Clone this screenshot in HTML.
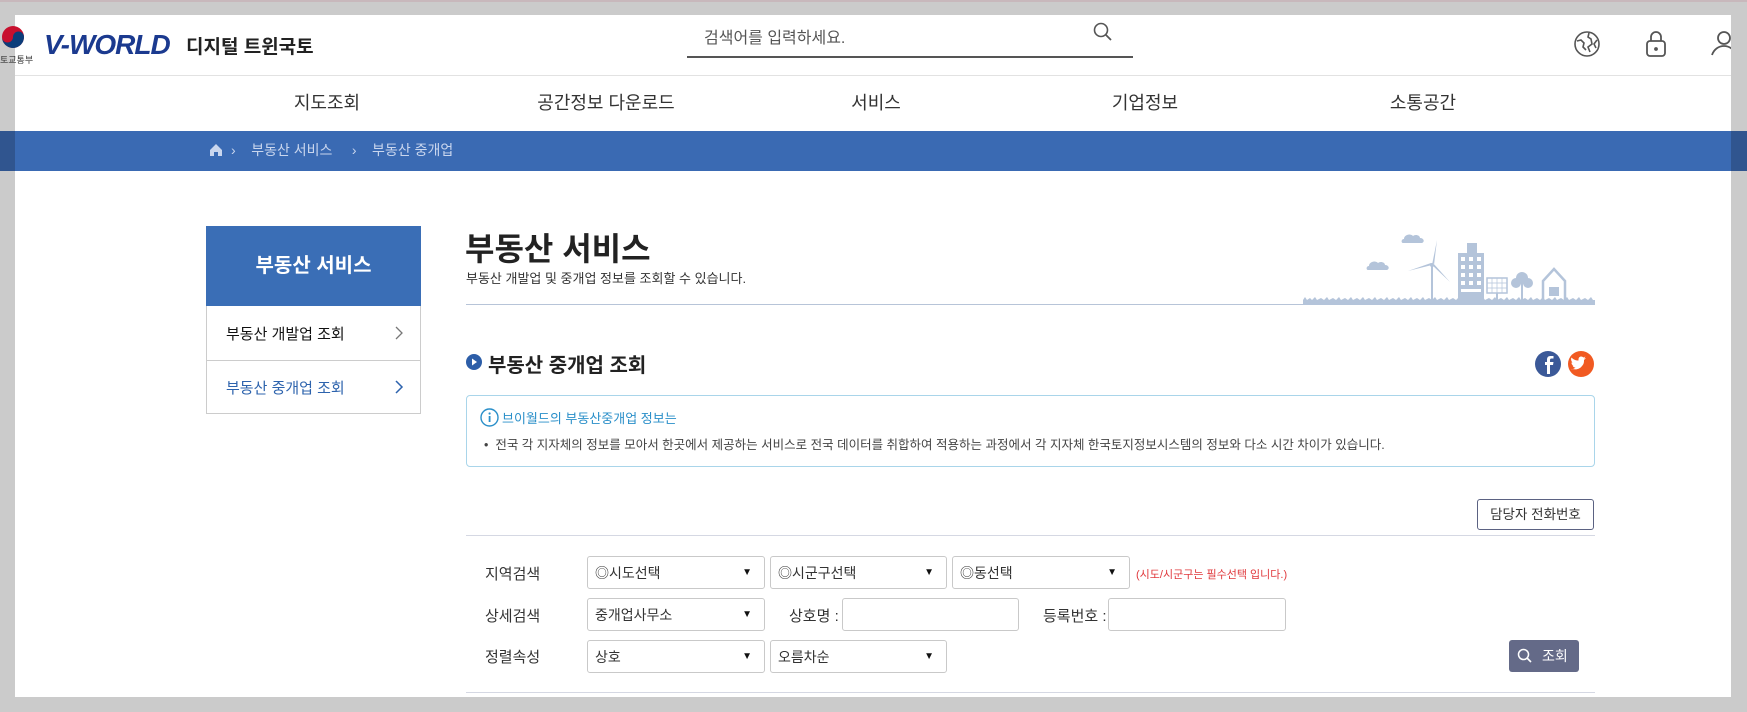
<!DOCTYPE html>
<html><head><meta charset="utf-8">
<style>
*{margin:0;padding:0;box-sizing:border-box}
body{width:1747px;height:712px;background:#cbcbcb;position:relative;overflow:hidden;font-family:"Liberation Sans","Noto Sans CJK KR",sans-serif;color:#222}
.a{position:absolute;white-space:nowrap}
.page{position:absolute;left:15px;top:15px;width:1716px;height:682px;background:#fff}
.sel{position:absolute;height:33px;border:1px solid #c9c9c9;border-radius:3px;background:#fff;font-size:14px;color:#333;padding:6px 0 0 7px}
.sel:after{content:"▼";position:absolute;right:12px;top:10px;font-size:10px;color:#111}
.inp{position:absolute;height:33px;border:1px solid #c9c9c9;border-radius:3px;background:#fff}
.lbl{font-size:15px;color:#333}
.nav{font-size:18px;color:#333;transform:translateX(-50%)}
</style></head><body>
<div class="a" style="left:0;top:0;width:1747px;height:2px;background:#c8b8bc"></div>
<div class="page"></div>
<!-- logo -->
<svg class="a" style="left:0;top:24px" width="28" height="26" viewBox="0 0 28 26"><circle cx="13" cy="13" r="11" fill="#c8102e"/><path d="M2 13a11 11 0 0 0 22 0a5.5 5.5 0 0 0-11 0a5.5 5.5 0 0 1-11 0z" fill="#0b3d7a"/></svg>
<div class="a" style="left:0;top:53px;font-size:9px;color:#333">토교통부</div>
<div class="a" style="left:44px;top:29px;font-size:28px;font-weight:bold;font-style:italic;color:#1b3a8f;letter-spacing:-1px">V-WORLD</div>
<div class="a" style="left:186px;top:32px;font-size:19px;font-weight:bold;color:#222">디지털 트윈국토</div>
<!-- search -->
<div class="a" style="left:704px;top:24px;font-size:16px;color:#555">검색어를 입력하세요.</div>
<div class="a" style="left:687px;top:56px;width:446px;height:2px;background:#555"></div>
<svg class="a" style="left:1093px;top:22px" width="20" height="20" viewBox="0 0 20 20"><circle cx="8" cy="8" r="6.5" fill="none" stroke="#555" stroke-width="1.6"/><path d="M13 13l5 5" stroke="#555" stroke-width="1.8"/></svg>
<!-- icons -->
<svg class="a" style="left:1573px;top:30px" width="28" height="28" viewBox="0 0 28 28" fill="none" stroke="#555" stroke-width="1.6"><circle cx="14" cy="14" r="12"/><path d="M4 11l4-1 3 3-1 4 3 3M16 3l-1 4 3 2 1 5-4 3 2 5M24 10l-3 4 2 4"/></svg>
<svg class="a" style="left:1644px;top:29px" width="24" height="30" viewBox="0 0 24 30" fill="none" stroke="#555" stroke-width="1.8"><rect x="3" y="12" width="18" height="15" rx="3"/><path d="M7 12V8a5 5 0 0 1 10 0v4"/><circle cx="12" cy="20" r="1" fill="#555"/></svg>
<svg class="a" style="left:1710px;top:29px" width="28" height="28" viewBox="0 0 28 28" fill="none" stroke="#555" stroke-width="1.8"><circle cx="14" cy="9" r="6"/><path d="M2 26c2-6 7-9 12-9s10 3 12 9"/></svg>
<div class="a" style="left:1731px;top:15px;width:16px;height:682px;background:#cbcbcb"></div>
<div class="a" style="left:15px;top:75px;width:1716px;height:1px;background:#e2e2e2"></div>
<div class="a nav" style="left:327px;top:89px">지도조회</div>
<div class="a nav" style="left:606px;top:89px">공간정보 다운로드</div>
<div class="a nav" style="left:876px;top:89px">서비스</div>
<div class="a nav" style="left:1145px;top:89px">기업정보</div>
<div class="a nav" style="left:1423px;top:89px">소통공간</div>
<!-- blue bar -->
<div class="a" style="left:0;top:131px;width:1747px;height:40px;background:#3a6ab3"></div>
<div class="a" style="left:0;top:131px;width:15px;height:40px;background:#30558f"></div>
<div class="a" style="left:1731px;top:131px;width:16px;height:40px;background:#30558f"></div>
<svg class="a" style="left:209px;top:143px" width="14" height="14" viewBox="0 0 14 14"><path d="M7 1L1 7v6h4V9h4v4h4V7z" fill="#c9d6ee"/></svg>
<div class="a" style="left:231px;top:140px;font-size:14px;color:#c9d6ee">›&nbsp;&nbsp;&nbsp; 부동산 서비스 &nbsp;&nbsp;&nbsp;&nbsp;›&nbsp;&nbsp;&nbsp; 부동산 중개업</div>
<!-- sidebar -->
<div class="a" style="left:206px;top:226px;width:215px;height:80px;background:#3a6eb6;color:#fff;font-size:20px;font-weight:bold;text-align:center;line-height:80px">부동산 서비스</div>
<div class="a" style="left:206px;top:306px;width:215px;height:108px;border:1px solid #ccc;border-top:none"></div>
<div class="a" style="left:206px;top:360px;width:215px;height:1px;background:#ccc"></div>
<div class="a" style="left:226px;top:323px;font-size:15px;color:#111">부동산 개발업 조회</div>
<svg class="a" style="left:394px;top:326px" width="10" height="14" viewBox="0 0 10 14"><path d="M2 1l6 6-6 6" fill="none" stroke="#777" stroke-width="1.3"/></svg>
<div class="a" style="left:226px;top:377px;font-size:15px;color:#2d63ad">부동산 중개업 조회</div>
<svg class="a" style="left:394px;top:380px" width="10" height="14" viewBox="0 0 10 14"><path d="M2 1l6 6-6 6" fill="none" stroke="#2d63ad" stroke-width="1.5"/></svg>
<!-- title -->
<div class="a" style="left:465px;top:224px;font-size:32px;font-weight:bold;color:#222">부동산 서비스</div>
<div class="a" style="left:466px;top:268px;font-size:13px;color:#333">부동산 개발업 및 중개업 정보를 조회할 수 있습니다.</div>
<div class="a" style="left:466px;top:304px;width:1129px;height:1px;background:#b7c4d8"></div>
<svg class="a" style="left:1302px;top:228px" width="294" height="80" viewBox="0 0 294 80" fill="#b4c4da">
<rect x="1" y="72" width="292" height="5"/>
<path d="M1 72l2-3 2 3 3-2 2 2 3-3 2 3 4-2 3 2 3-3 2 3 4-2 3 2 3-3 2 3 4-2 3 2 3-3 2 3 4-2 3 2 3-3 2 3 4-2 3 2 3-3 2 3 4-2 3 2 3-3 2 3 4-2 3 2 3-3 2 3 4-2 3 2 3-3 2 3 4-2 3 2 3-3 2 3 4-2 3 2 3-3 2 3 4-2 3 2 3-3 2 3 4-2 3 2 3-3 2 3 4-2 3 2 3-3 2 3 4-2 3 2 3-3 2 3 4-2 3 2 3-3 2 3 4-2 3 2 3-3 2 3 4-2 3 2 3-3 2 3 4-2 3 2 3-3 2 3 4-2 3 2 3-3 2 3 4-2 3 2 3-3 2 3 4-2 3 2 3-3 2 3 4-2 3 2 3-3 2 3 4-2 3 2 3-3 2 3 V74H1z"/>
<path d="M101 15c-2 0-2-4 1-4c0-4 6-6 9-3c2-2 7-1 7 2c4 0 5 4 2 5z"/>
<path d="M66 42c-2 0-2-4 1-4c0-4 6-6 9-3c2-2 7-1 7 2c4 0 5 4 2 5z"/>
<path d="M129 38h2v34h-2z"/><path d="M130 37l5-25-3 25zM130 37l-24 6 23-8zM130 37l18 17-17-19z"/><circle cx="130" cy="37" r="2"/>
<path d="M156 72V25h9V15h10v10h7v47z"/>
<g fill="#fff"><rect x="159" y="29" width="4" height="4"/><rect x="167" y="29" width="4" height="4"/><rect x="175" y="29" width="4" height="4"/><rect x="159" y="37" width="4" height="4"/><rect x="167" y="37" width="4" height="4"/><rect x="175" y="37" width="4" height="4"/><rect x="159" y="45" width="4" height="4"/><rect x="167" y="45" width="4" height="4"/><rect x="175" y="45" width="4" height="4"/><rect x="159" y="53" width="4" height="4"/><rect x="167" y="53" width="4" height="4"/><rect x="175" y="53" width="4" height="4"/><rect x="159" y="61" width="20" height="3"/></g>
<rect x="185" y="50" width="20" height="15" fill="none" stroke="#b4c4da" stroke-width="1.5"/><path d="M190 50v15M195 50v15M200 50v15M185 55h20M185 60h20" stroke="#b4c4da" stroke-width="0.7"/><rect x="194" y="65" width="2" height="8"/>
<circle cx="220" cy="50" r="6"/><circle cx="214" cy="55" r="5"/><circle cx="226" cy="55" r="5"/><rect x="219" y="55" width="2" height="18"/>
<path d="M241 72V53l11-12 11 12v19" fill="none" stroke="#b4c4da" stroke-width="2.5"/><rect x="247" y="59" width="10" height="9"/>
</svg>
<!-- section -->
<svg class="a" style="left:466px;top:354px" width="16" height="16" viewBox="0 0 16 16"><circle cx="8" cy="8" r="8" fill="#2d5ea8"/><path d="M6 4.5l5 3.5-5 3.5z" fill="#fff"/></svg>
<div class="a" style="left:488px;top:349px;font-size:20px;font-weight:bold;color:#222">부동산 중개업 조회</div>
<svg class="a" style="left:1535px;top:350px" width="60" height="28" viewBox="0 0 60 28"><circle cx="13" cy="14" r="13" fill="#3b5998"/><path d="M15 24v-9h3l.5-3H15v-2c0-1 .5-1.5 1.5-1.5H18.5V6h-3c-2.5 0-3.5 1.5-3.5 3.8V12H10v3h2v9z" fill="#fff"/><circle cx="46" cy="14" r="13" fill="#f15a22"/><path d="M38 19c3 1 7 0 9-3 2-2 2-4 2-6l2-2-2 .5 1.5-2-2 1c-2-2-5-1-5 2v1c-3 0-5-1-7-3-1 2 0 4 1 5h-1c0 2 1 3 3 3h-2c1 2 2 2 3 2-1 1-3 2-5 2z" fill="#fff"/></svg>
<div class="a" style="left:466px;top:395px;width:1129px;height:72px;border:1px solid #a9d5ea;border-radius:4px"></div>
<svg class="a" style="left:480px;top:408px" width="19" height="19" viewBox="0 0 19 19"><circle cx="9.5" cy="9.5" r="8.5" fill="none" stroke="#2a8fc9" stroke-width="1.4"/><rect x="8.7" y="8" width="1.8" height="6" fill="#2a8fc9"/><circle cx="9.6" cy="5.5" r="1.1" fill="#2a8fc9"/></svg>
<div class="a" style="left:502px;top:408px;font-size:13px;color:#2a8fc9">브이월드의 부동산중개업 정보는</div>
<div class="a" style="left:484px;top:434px;font-size:12.5px;color:#444">• &nbsp;전국 각 지자체의 정보를 모아서 한곳에서 제공하는 서비스로 전국 데이터를 취합하여 적용하는 과정에서 각 지자체 한국토지정보시스템의 정보와 다소 시간 차이가 있습니다.</div>
<div class="a" style="left:1477px;top:499px;width:117px;height:31px;border:1px solid #5b6282;border-radius:3px;font-size:13.5px;color:#333;text-align:center;line-height:29px">담당자 전화번호</div>
<div class="a" style="left:466px;top:535px;width:1129px;height:1px;background:#d5d8e3"></div>
<div class="a" style="left:466px;top:692px;width:1129px;height:1px;background:#d5d8e3"></div>
<div class="a lbl" style="left:485px;top:563px">지역검색</div>
<div class="a lbl" style="left:485px;top:605px">상세검색</div>
<div class="a lbl" style="left:485px;top:646px">정렬속성</div>
<div class="sel" style="left:587px;top:556px;width:178px">◎시도선택</div>
<div class="sel" style="left:770px;top:556px;width:177px">◎시군구선택</div>
<div class="sel" style="left:952px;top:556px;width:178px">◎동선택</div>
<div class="a" style="left:1136px;top:566px;font-size:11px;color:#e0383c">(시도/시군구는 필수선택 입니다.)</div>
<div class="sel" style="left:587px;top:598px;width:178px">중개업사무소</div>
<div class="a lbl" style="left:789px;top:605px">상호명 :</div>
<div class="inp" style="left:842px;top:598px;width:177px"></div>
<div class="a lbl" style="left:1043px;top:605px">등록번호 :</div>
<div class="inp" style="left:1108px;top:598px;width:178px"></div>
<div class="sel" style="left:587px;top:640px;width:178px">상호</div>
<div class="sel" style="left:770px;top:640px;width:177px">오름차순</div>
<div class="a" style="left:1509px;top:640px;width:70px;height:32px;background:#646a88;border-radius:3px;color:#fff;font-size:14px;line-height:32px;padding-left:33px">조회</div>
<svg class="a" style="left:1517px;top:648px" width="16" height="16" viewBox="0 0 16 16"><circle cx="6.5" cy="6.5" r="5" fill="none" stroke="#fff" stroke-width="1.5"/><path d="M10 10l4 4" stroke="#fff" stroke-width="1.6"/></svg>
</body></html>
